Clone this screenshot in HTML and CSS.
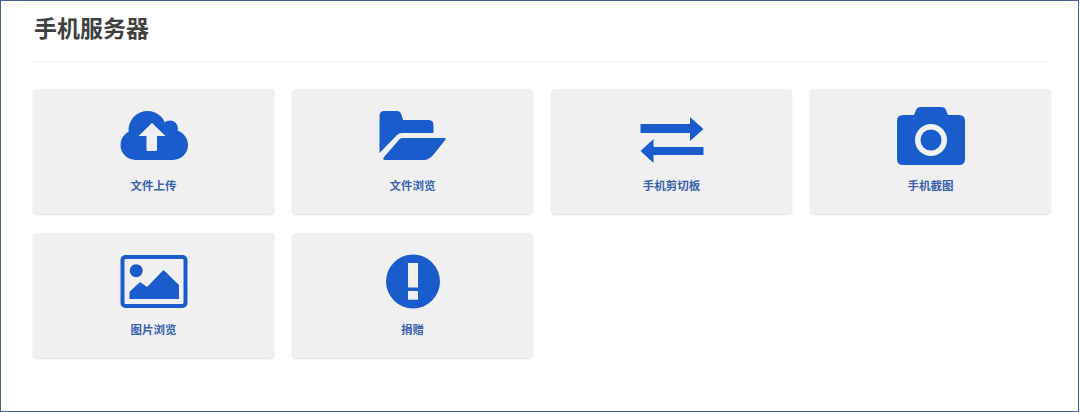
FILE: index.html
```html
<!DOCTYPE html>
<html lang="zh-CN">
<head>
  <meta charset="UTF-8" />
  <meta name="viewport" content="width=device-width, initial-scale=1.0" />
  <title>手机服务器</title>
  <link rel="stylesheet" href="styles.css">
</head>
<body>

  <div class="container">
    <h2 class="title">手机服务器</h2>

    <div class="grid">
      <a class="card" href="#">
        <svg class="icon" viewBox="0 0 68 60">
          <circle cx="27.5" cy="23" r="19" />
          <circle cx="50" cy="21.5" r="8" />
          <circle cx="15.5" cy="38" r="15" />
          <circle cx="53" cy="38" r="15" />
          <rect x="15.5" y="23" width="37.5" height="30" />
          <path class="cut" d="M32 16 L18.5 29 H26.5 V43 Q26.5 44 27.5 44 H36 Q37 44 37 43 V29 H45.5 Z" />
        </svg>
        <span class="label">文件上传</span>
      </a>

      <a class="card" href="#">
        <svg class="icon" viewBox="0 0 68 60">
          <path d="M0.5 9 Q0.5 4 5.5 4 H18 Q21.5 4 22.5 8 L24 13 H49 Q54.5 13 54.5 18 V26 H23 Q20 26 18 28 L0.5 46 Z" />
          <path d="M23 31 H65.5 Q67 31 66.5 32.5 L55 47 Q50 53 45 53 H6 Q3 53 5 50 L19 34 Q21 31 23 31 Z" />
        </svg>
        <span class="label">文件浏览</span>
      </a>

      <a class="card" href="#">
        <svg class="icon" viewBox="0 0 68 60">
          <path d="M2.5 17 H52 V10 L65.5 22 L52 34 V26 H2.5 Z" />
          <path d="M2.5 44 L15.5 32 V40 H65.5 V48 H15.5 V56 Z" />
        </svg>
        <span class="label">手机剪切板</span>
      </a>

      <a class="card" href="#">
        <svg class="icon" viewBox="0 0 68 60">
          <path d="M6 8 H17 L19 3 Q20 0 24 0 H44 Q48 0 49 3 L51 8 H62 Q68 8 68 14 V52 Q68 58 62 58 H6 Q0 58 0 52 V14 Q0 8 6 8 Z" />
          <circle class="cut" cx="34" cy="33" r="16" />
          <circle cx="34" cy="33" r="10.5" />
        </svg>
        <span class="label">手机截图</span>
      </a>

      <a class="card" href="#">
        <svg class="icon" viewBox="0 0 68 60">
          <rect class="outline" x="2.5" y="6" width="63" height="49" rx="3" />
          <circle cx="16.2" cy="19.7" r="6.5" />
          <path d="M9.5 48 V40.7 L20 31 L27 36 L43.5 19 L59 34 V48 Z" />
        </svg>
        <span class="label">图片浏览</span>
      </a>

      <a class="card" href="#">
        <svg class="icon" viewBox="0 0 68 60">
          <circle cx="34" cy="30.5" r="27" />
          <rect class="cut" x="29" y="12" width="10" height="24.5" />
          <rect class="cut" x="29" y="40" width="10" height="8.7" />
        </svg>
        <span class="label">捐赠</span>
      </a>
    </div>
  </div>

</body>
</html>
```

FILE: styles.css
```css
* {
  box-sizing: border-box;
}

body {
  margin: 0;
  background-color: white;
  font-family: "Liberation Sans", "Noto Sans CJK SC", sans-serif;
}

.container {
  height: 412px;
  width: 1079px;
  padding-left: 32px;
  border: 1px solid #3f5f95;
}

.title {
  margin: 0;
  width: 1016px;
  height: 61px;
  padding: 12px 0 0 1px;
  font-size: 23px;
  line-height: 33px;
  font-weight: 700;
  color: #404040;
  border-bottom: 1px solid #f0f0f0;
}

.grid {
  display: grid;
  grid-template-columns: repeat(4, 241px);
  grid-auto-rows: 125px;
  column-gap: 18px;
  row-gap: 19px;
  margin-top: 27px;
}

.card {
  display: flex;
  flex-direction: column;
  align-items: center;
  padding-top: 18px;
  background-color: #f0f0f1;
  border-radius: 4px;
  box-shadow: 0 1px 2px rgba(0, 0, 0, 0.12);
  text-decoration: none;
}

.icon {
  width: 68px;
  height: 60px;
  fill: #1a5ccb;
}

.icon .cut {
  fill: #f0f0f1;
}

.icon .outline {
  fill: none;
  stroke: #1a5ccb;
  stroke-width: 4;
}

.label {
  margin-top: 11px;
  font-size: 11.5px;
  line-height: 16px;
  font-weight: 700;
  color: #3a62ad;
}
```
